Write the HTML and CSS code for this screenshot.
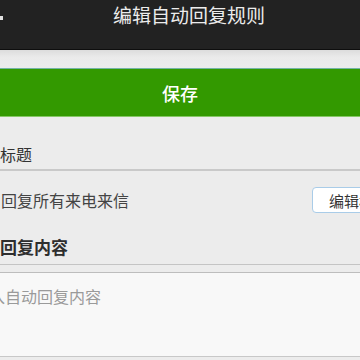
FILE: index.html
```html
<!DOCTYPE html>
<html lang="zh">
<head>
<meta charset="utf-8">
<link rel="stylesheet" href="styles.css">
</head>
<body>
<div class="page">
  <header class="topbar">
    <span class="back"></span>
    <h1 class="title">编辑自动回复规则</h1>
  </header>
  <div class="band"></div>
  <button class="save">保存</button>
  <div class="section-head">标题</div>
  <div class="row">
    <span class="row-text">回复所有来电来信</span>
    <button class="edit-btn">编辑标题</button>
  </div>
  <div class="section-head bold">回复内容</div>
  <div class="textarea"><span class="placeholder">输入自动回复内容</span></div>
</div>
</body>
</html>
```

FILE: styles.css
```css
* { box-sizing: border-box; margin: 0; padding: 0; }
html, body { width: 360px; height: 360px; overflow: hidden; }
body {
  background: #ececec;
  font-family: "Noto Sans CJK SC", "Noto Sans", sans-serif;
  color: #333;
}
.page { display: flex; flex-direction: column; width: 360px; }
.topbar {
  position: relative;
  height: 50px;
  background: #222222;
  border-bottom: 1px solid #0e0e0e;
  display: flex;
  justify-content: center;
  padding-left: 18px;
}
.back {
  position: absolute;
  left: 0;
  top: 16px;
  width: 3px;
  height: 4px;
  background: #e0e0e0;
}
.title {
  font-size: 19px;
  font-weight: normal;
  color: #ececec;
  line-height: 24px;
  margin-top: 3px;
}
.band {
  height: 18px;
  background: linear-gradient(#dcdcdc, #eaeaea 40%, #ececec);
}
.save {
  height: 49px;
  background: #339900;
  border: none;
  border-top: 1px solid #73b3a5;
  border-bottom: 1px solid #86c766;
  color: #fff;
  font-family: inherit;
  font-size: 18px;
  font-weight: 500;
}
.section-head {
  font-size: 16px;
  line-height: 22px;
  padding-top: 26px;
  padding-bottom: 4px;
  border-bottom: 2px solid #c9c9c9;
  color: #333;
}
.section-head.bold {
  font-size: 17px;
  font-weight: bold;
  padding-top: 7px;
  padding-bottom: 6px;
  border-bottom: 1px solid #c4c4c4;
  margin-bottom: 7px;
  color: #2e2e2e;
}
.row {
  height: 58px;
  display: flex;
  align-items: center;
  justify-content: space-between;
  padding-left: 1px;
}
.row-text { font-size: 16px; color: #444; line-height: 22px; }
.edit-btn {
  flex: 0 0 88px;
  width: 88px;
  height: 26px;
  margin-right: -40px;
  background: #fff;
  border: 1px solid #a9cce8;
  border-radius: 4px;
  font-family: inherit;
  font-size: 15px;
  color: #333;
  text-align: left;
  padding-left: 16px;
  white-space: nowrap;
  overflow: hidden;
}
.textarea {
  height: 85px;
  background: #f8f8f8;
  border-top: 1px solid #bdbdbd;
  border-bottom: 1px solid #c8c8c8;
  padding-top: 12px;
  overflow: hidden;
}
.placeholder {
  display: block;
  font-size: 16px;
  line-height: 22px;
  color: #9a9a9a;
  margin-left: -27px;
  white-space: nowrap;
}
```
